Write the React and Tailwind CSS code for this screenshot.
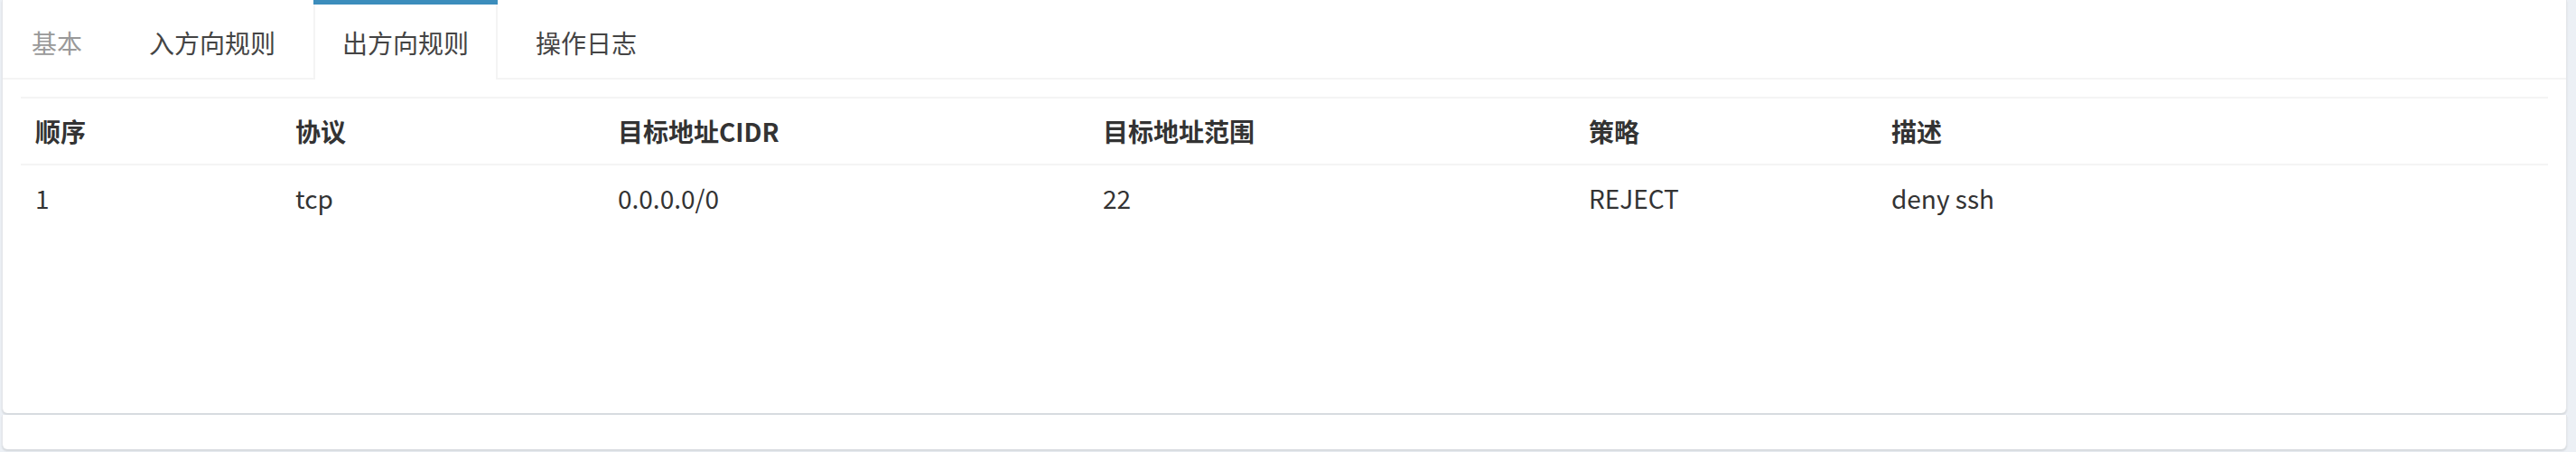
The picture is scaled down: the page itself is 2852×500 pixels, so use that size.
export default function App() {
  const font = { fontFamily: '"Noto Sans CJK SC", "Noto Sans", sans-serif' };
  const cols = [
    { label: "顺序", w: "w-[288px]", v: "1" },
    { label: "协议", w: "w-[357px]", v: "tcp" },
    { label: "目标地址CIDR", w: "w-[537px]", v: "0.0.0.0/0" },
    { label: "目标地址范围", w: "w-[538px]", v: "22" },
    { label: "策略", w: "w-[335px]", v: "REJECT" },
    { label: "描述", w: "", v: "deny ssh" },
  ];
  const tabs = [
    { label: "基本", cls: "text-[#999]" },
    { label: "入方向规则", cls: "text-[#444]" },
    { label: "出方向规则", cls: "text-[#444]", active: true },
    { label: "操作日志", cls: "text-[#444]" },
  ];
  return (
    <div className="w-[2852px] h-[500px] bg-[#ecf0f5] pl-[2px] pr-[10px] text-[28px] text-[#333]" style={font}>
      <div className="h-[457px] bg-white rounded-b-[6px] shadow-[0_2px_2px_rgba(0,0,0,0.1)] border-l border-r border-[#e4e6ea] flex flex-col">
        <ul className="flex border-b-2 border-[#f4f4f4] h-[88px]">
          {tabs.map((t) => (
            <li
              key={t.label}
              className={`mr-[10px] -mb-[2px] border-t-[5px] ${t.active ? "border-t-[#3c8dbc] bg-white" : "border-t-transparent"}`}
            >
              <div
                className={`px-[30px] h-[83px] flex items-center leading-[40px] border-x-2 ${t.active ? "border-x-[#f4f4f4]" : "border-x-transparent"} ${t.cls}`}
              >
                {t.label}
              </div>
            </li>
          ))}
        </ul>
        <div className="px-[20px] pt-[19px]">
          <table className="w-full border-collapse leading-[40px]">
            <thead>
              <tr>
                {cols.map((c) => (
                  <th key={c.label} className={`${c.w} text-left font-bold px-[16px] py-[16px] border-t-2 border-[#f4f4f4]`}>
                    {c.label}
                  </th>
                ))}
              </tr>
            </thead>
            <tbody>
              <tr>
                {cols.map((c) => (
                  <td key={c.label} className="px-[16px] py-[16px] border-t-2 border-[#f4f4f4]">
                    {c.v}
                  </td>
                ))}
              </tr>
            </tbody>
          </table>
        </div>
      </div>
      <div className="mt-[2px] h-[38px] bg-white rounded-b-[6px] shadow-[0_2px_2px_rgba(0,0,0,0.1)] border-l border-r border-[#e4e6ea]"></div>
    </div>
  );
}
